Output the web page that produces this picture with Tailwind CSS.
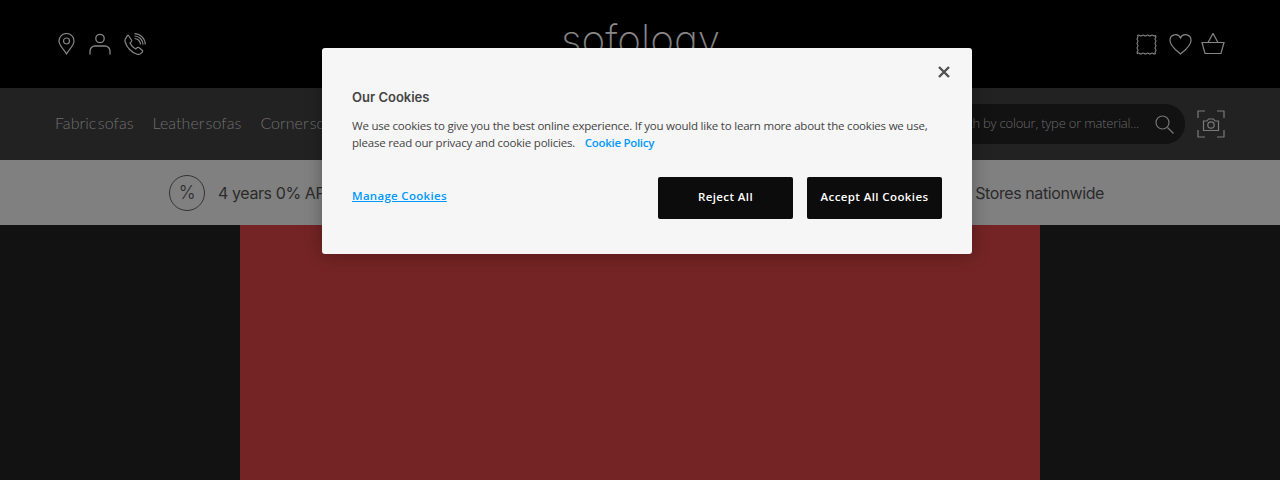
<!doctype html>
<html><head><meta charset="utf-8"><script src="https://cdn.jsdelivr.net/npm/@tailwindcss/browser@4"></script></head>
<body class="bg-[#121212] overflow-hidden font-['Lato',sans-serif]">
<div class="relative h-[480px] w-[1280px] overflow-hidden">
  <header class="h-[88px] bg-black flex items-center justify-between pl-[57px] pr-[55px] text-[#858585]">
    <div class="flex items-center gap-[13px]">
      <svg class="w-[19px] h-[22px]" viewBox="0 0 19 22" fill="none" stroke="currentColor" stroke-width="1.200"><path d="M9.500 21C7 16.500 2 12.500 2 8a7.500 7.500 0 0 1 15 0c0 4.500-5 8.500-7.500 13Z"/><circle cx="9.500" cy="8" r="3"/></svg>
      <svg class="w-[22px] h-[22px]" viewBox="0 0 22 22" fill="none" stroke="currentColor" stroke-width="1.300"><circle cx="11" cy="5.500" r="4.200"/><path d="M1 21.500v-3.500a5 5 0 0 1 5-5h10a5 5 0 0 1 5 5v3.500"/></svg>
      <svg class="w-[22px] h-[22px]" viewBox="0 0 22 22" fill="none" stroke="currentColor" stroke-width="1.200"><path d="M4.500 2.500 7.500 7c.4.700.2 1.300-.3 1.800L6 10c1 2.300 3.200 4.700 5.700 6l1.300-1.200c.5-.5 1.200-.6 1.800-.2l3.400 2.600c.6.500.6 1.200.1 1.800l-1.300 1.300c-1 1-2.400 1.400-4 .9C7.500 19.500 2.700 14.500 1.200 9c-.5-1.700-.1-3.200 1-4.200l1-1.900c.2-.4.800-.8 1.300-.4Z"/><path d="M10.500 5.500a6 6 0 0 1 6 6M10.500 3a8.500 8.500 0 0 1 8.500 8.500M10.500.7A11 11 0 0 1 21.300 11.500"/></svg>
    </div>
    <div class="absolute left-[561px] top-[12px] text-[40.500px] leading-[56px] font-extralight text-[#8a8a8a] font-['Inter',sans-serif]">sofology</div>
    <div class="flex items-center">
      <svg class="w-[21px] h-[21px] mr-[12px]" viewBox="0 0 21 21" fill="none" stroke="currentColor" stroke-width="1.100"><path d="M1.500 1.500q1.125-.9 2.250 0t2.250 0 2.250 0 2.250 0 2.250 0 2.250 0 2.250 0 2.250 0q.9 1.125 0 2.250t0 2.250 0 2.250 0 2.250 0 2.250 0 2.250 0 2.250 0 2.250q-1.125.9-2.250 0t-2.250 0-2.250 0-2.250 0-2.250 0-2.250 0-2.250 0-2.250 0q-.9-1.125 0-2.250t0-2.250 0-2.250 0-2.250 0-2.250 0-2.250 0-2.250 0-2.250Z"/></svg>
      <svg class="w-[23px] h-[21px] mr-[9px]" viewBox="0 0 23 21" fill="none" stroke="currentColor" stroke-width="1.200"><path d="M11.500 20C8 17 1 12 1 6.500A5.500 5.500 0 0 1 11.500 4 5.500 5.500 0 0 1 22 6.500C22 12 15 17 11.500 20Z"/></svg>
      <svg class="w-[24px] h-[22px]" viewBox="0 0 24 22" fill="none" stroke="currentColor" stroke-width="1.200"><path d="M1 9.500h22l-3 11H4L1 9.500ZM7 9.500l5-9 5 9"/></svg>
    </div>
  </header>
  <nav class="h-[72px] bg-[#222222] flex items-center justify-between pl-[55px] pr-[55px]">
    <ul class="flex gap-[19px] text-[16px] font-light text-[#6e6e6e] [word-spacing:-3px] tracking-[0.05px] pb-[2px]">
      <li>Fabric sofas</li><li>Leather sofas</li><li>Corner sofas</li>
    </ul>
    <div class="flex items-center gap-[12px]">
      <div class="w-[300px] h-[40px] rounded-[20px] bg-[#121212] flex items-center justify-end gap-[16px] pr-[11px] text-[13px] font-light text-[#6a6a6a] font-['Open_Sans',sans-serif] tracking-[-0.2px]">
        <span class="whitespace-nowrap">Search by colour, type or material...</span>
        <svg class="w-[19px] h-[19px] text-[#767676] shrink-0" viewBox="0 0 19 19" fill="none" stroke="currentColor" stroke-width="1.200"><circle cx="7.500" cy="7.500" r="6.500"/><path d="m12.500 12.500 6 6"/></svg>
      </div>
      <svg class="w-[28px] h-[28px] text-[#7a7a7a]" viewBox="0 0 28 28" fill="none" stroke="currentColor" stroke-width="1.200"><path d="M1 8V1h7M20 1h7v7M1 20v7h7M20 27h7v-7"/><path d="M6.500 11h3.500l1.500-2h5l1.500 2h3.500v9.500h-15z"/><circle cx="14" cy="15" r="3.200"/></svg>
    </div>
  </nav>
  <section class="h-[65px] bg-[#808080] flex items-center justify-between pl-[169px] pr-[176px] text-[16px] text-[#2b2b2b] tracking-[-0.4px] font-['Inter',sans-serif]">
    <div class="flex items-center gap-[13px]">
      <div class="w-[36px] h-[36px] rounded-full border border-[#333333] flex items-center justify-center text-[18px] font-light">%</div>
      <span>4 years 0% APR</span>
    </div>
    <span>Stores nationwide</span>
  </section>
  <main class="h-[255px] flex justify-center">
    <div class="w-[800px] bg-[#742424]"></div>
  </main>

  <div class="absolute left-[322px] top-[48px] w-[650px] h-[206px] bg-[#f6f6f6] rounded-[3px] shadow-[0_0_18px_rgba(0,0,0,0.3)] px-[30px] pt-[40px] font-['Open_Sans',sans-serif] text-[#444444]">
    <svg class="absolute right-[22px] top-[18px] w-[12px] h-[12px] text-[#505050]" viewBox="0 0 12 12" fill="none" stroke="currentColor" stroke-width="2.400"><path d="m1 1 10 10M11 1 1 11"/></svg>
    <h2 class="text-[13px] leading-[18px] font-semibold font-['Inter',sans-serif]">Our Cookies</h2>
    <p class="mt-[11px] text-[11.500px] leading-[17px] w-[590px] tracking-[-0.21px]">We use cookies to give you the best online experience. If you would like to learn more about the cookies we use, please read our privacy and cookie policies. <a class="ml-[7px] font-semibold text-[#0099ff] tracking-[-0.3px]">Cookie Policy</a></p>
    <div class="mt-[26px] flex items-start justify-between">
      <a class="mt-[10px] text-[11.500px] leading-[18px] font-semibold text-[#0099ff] underline tracking-[0.3px]">Manage Cookies</a>
      <div class="flex gap-[14px]">
        <button class="w-[135px] h-[42px] bg-[#0c0c0c] rounded-[2px] text-white text-[11.500px] font-semibold tracking-[0.4px] pb-[3px]">Reject All</button>
        <button class="w-[135px] h-[42px] bg-[#0c0c0c] rounded-[2px] text-white text-[11.500px] font-semibold tracking-[0.4px] pb-[3px]">Accept All Cookies</button>
      </div>
    </div>
  </div>
</div>
</body></html>
